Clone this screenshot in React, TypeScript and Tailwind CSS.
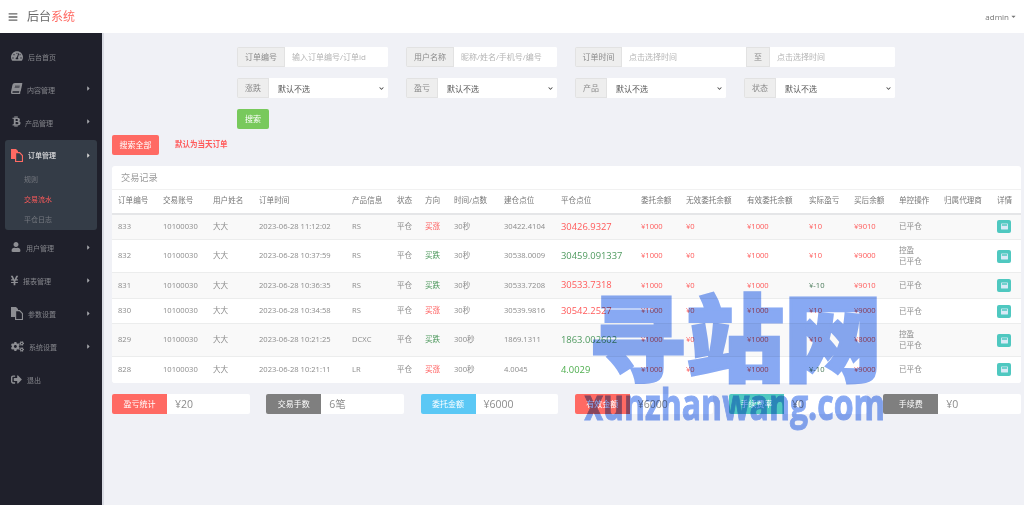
import type { ReactNode } from "react";
import {
  FaBars,
  FaBook,
  FaBtc,
  FaCaretDown,
  FaCaretRight,
  FaChevronDown,
  FaCogs,
  FaSignOutAlt,
  FaTachometerAlt,
  FaUser,
  FaWindowMaximize,
  FaYenSign,
} from "react-icons/fa";

const red = "text-[#ff5a5a]";
const green = "text-[#4f9a5f]";

const rows = [
  { id: 833, name: "RS", dir: "买涨", up: true, time: "2023-06-28 11:12:02", dur: "30秒", open: "30422.4104", close: "30426.9327", closeCls: red, pnl: "¥10", after: "¥9010", ctrl: false, h: "h-[26px]" },
  { id: 832, name: "RS", dir: "买跌", up: false, time: "2023-06-28 10:37:59", dur: "30秒", open: "30538.0009", close: "30459.091337", closeCls: green, pnl: "¥10", after: "¥9000", ctrl: true, h: "h-[33px]" },
  { id: 831, name: "RS", dir: "买跌", up: false, time: "2023-06-28 10:36:35", dur: "30秒", open: "30533.7208", close: "30533.7318", closeCls: red, pnl: "¥-10", after: "¥9010", ctrl: false, h: "h-[26px]" },
  { id: 830, name: "RS", dir: "买涨", up: true, time: "2023-06-28 10:34:58", dur: "30秒", open: "30539.9816", close: "30542.2527", closeCls: red, pnl: "¥10", after: "¥9000", ctrl: false, h: "h-[25px]" },
  { id: 829, name: "DCXC", dir: "买跌", up: false, time: "2023-06-28 10:21:25", dur: "300秒", open: "1869.1311", close: "1863.002602", closeCls: green, pnl: "¥10", after: "¥8000", ctrl: true, h: "h-[33px]" },
  { id: 828, name: "LR", dir: "买涨", up: true, time: "2023-06-28 10:21:11", dur: "300秒", open: "4.0045", close: "4.0029", closeCls: "text-[#4fae4f]", pnl: "¥-10", after: "¥9000", ctrl: false, h: "h-[26px]" },
];

const heads = ["订单编号", "交易账号", "用户姓名", "订单时间", "产品信息", "状态", "方向", "时间/点数", "建仓点位", "平仓点位", "委托余额", "无效委托余额", "有效委托余额", "实际盈亏", "买后余额", "单控操作", "归属代理商", "详情"];
const colWidths = ["w-[45px]", "w-[50px]", "w-[46px]", "w-[93px]", "w-[45px]", "w-[28px]", "w-[29px]", "w-[50px]", "w-[57px]", "w-[80px]", "w-[45px]", "w-[61px]", "w-[62px]", "w-[45px]", "w-[45px]", "w-[45px]", "w-[53px]", "w-[30px]"];

const stats = [
  { label: "盈亏统计", value: "¥20", cls: "bg-[#ff6a63]" },
  { label: "交易手数", value: "6笔", cls: "bg-[#7f7f7f]" },
  { label: "委托金额", value: "¥6000", cls: "bg-[#5bc8f5]" },
  { label: "有效金额", value: "¥6000", cls: "bg-[#ff6a63]" },
  { label: "手续费率", value: "¥0", cls: "bg-[#4fc8c0]" },
  { label: "手续费", value: "¥0", cls: "bg-[#7f7f7f]" },
];

// back page filled, front page outlined
function FilesIcon({ className }: { className: string }) {
  return (
    <svg viewBox="0 0 12 13" className={className} fill="currentColor">
      <path d="M0 0h5l2 2v1H4v7H0z" />
      <path d="M4.6 3.6h4L11.5 6.5v6h-6.9z" fill="none" stroke="currentColor" strokeWidth="1.2" />
    </svg>
  );
}

function NavItem({ icon, label, gap, arrow = true }: { icon: ReactNode; label: string; gap: string; arrow?: boolean }) {
  return (
    <div className="flex h-[33px] items-center pl-[11px] pr-[10px] text-[7px] text-[#85868c]">
      <span className="text-[#8d8e93]">{icon}</span>
      <span className={`${gap} mt-[5px]`}>{label}</span>
      {arrow && <FaCaretRight className="ml-auto text-[7px] text-[#a5a6ab]" />}
    </div>
  );
}

function Label({ children, w }: { children: ReactNode; w: string }) {
  return (
    <span className={`${w} flex shrink-0 items-center justify-center border border-[#e2e2e2] bg-[#eeeeee] text-[8px] text-[#8a8a8a]`}>
      {children}
    </span>
  );
}

function TextField({ label, w, placeholder }: { label: string; w: string; placeholder: string }) {
  return (
    <div className="flex h-[20px] overflow-hidden rounded-[2px] bg-white">
      <Label w={w}>{label}</Label>
      <input placeholder={placeholder} className="min-w-0 flex-1 bg-white px-[7px] text-[8px] outline-none placeholder:text-[#b4b4b4]" />
    </div>
  );
}

function SelectField({ label }: { label: string }) {
  return (
    <div className="relative flex h-[20px] overflow-hidden rounded-[2px] bg-white">
      <Label w="w-[32px]">{label}</Label>
      <select className="min-w-0 flex-1 appearance-none bg-white px-[9px] pt-[2px] text-[8px] text-[#555] outline-none">
        <option>默认不选</option>
      </select>
      <FaChevronDown className="pointer-events-none absolute right-[4px] top-[8px] text-[5px] text-[#444]" />
    </div>
  );
}

export default function App() {
  return (
    <div className="relative flex h-screen flex-col overflow-hidden bg-[#f0f1f6] font-['Open_Sans','Noto_Sans_CJK_SC',sans-serif]">
      <header className="flex h-[33px] shrink-0 items-center bg-white pl-[8px] pr-[7px]">
        <FaBars className="text-[10px] text-[#666]" />
        <h1 className="ml-[9px] text-[12px] text-[#666]">
          后台<span className="text-[#ff6a63]">系统</span>
        </h1>
        <div className="ml-auto flex items-center gap-[1px] text-[8px] text-[#777]">
          admin
          <FaCaretDown className="text-[7px]" />
        </div>
      </header>

      <div className="flex min-h-0 flex-1">
        <aside className="w-[104px] shrink-0 border-r-2 border-[#d9dbe3] bg-[#1f202b] pt-[6px]">
          <NavItem icon={<FaTachometerAlt className="text-[12px]" />} label="后台首页" gap="ml-[5px]" arrow={false} />
          <NavItem icon={<FaBook className="-skew-x-12 text-[11px]" />} label="内容管理" gap="ml-[5px]" />
          <NavItem icon={<FaBtc className="text-[11px]" />} label="产品管理" gap="ml-[3px]" />
          <div className="mx-[5px] mb-[1px] mt-[1.5px] h-[90px] rounded-[3px] bg-[#343c47]">
            <div className="flex h-[29px] items-center pl-[6px] pr-[5px] pt-[2px] text-[7px] font-bold text-[#c9cacd]">
              <FilesIcon className="h-[13px] w-[12px] text-[#ff6a63]" />
              <span className="ml-[5px] mt-[2px]">订单管理</span>
              <FaCaretRight className="ml-auto text-[7px] text-[#d5d5d5]" />
            </div>
            <div className="flex h-[20px] items-center pl-[19px] pt-[3px] text-[7px] text-[#777a80]">规则</div>
            <div className="flex h-[20px] items-center pl-[19px] pt-[3px] text-[7px] text-[#ff5a5a]">交易流水</div>
            <div className="flex h-[20px] items-center pl-[19px] pt-[3px] text-[7px] text-[#777a80]">平仓日志</div>
          </div>
          <NavItem icon={<FaUser className="text-[10px]" />} label="用户管理" gap="ml-[5px]" />
          <NavItem icon={<FaYenSign className="-ml-[2px] text-[11px]" />} label="报表管理" gap="ml-[3px]" />
          <NavItem icon={<FilesIcon className="h-[13px] w-[12px]" />} label="参数设置" gap="ml-[5px]" />
          <NavItem icon={<FaCogs className="text-[13px]" />} label="系统设置" gap="ml-[5px]" />
          <NavItem icon={<FaSignOutAlt className="text-[11px]" />} label="退出" gap="ml-[5px]" arrow={false} />
        </aside>

        <main className="min-w-0 flex-1 pl-[8px] pr-[3px] pt-[14px]">
          <div className="ml-[125px] grid w-[658px] grid-cols-[151px_151px_151px_151px] gap-x-[18px] gap-y-[11px]">
            <TextField label="订单编号" w="w-[48px]" placeholder="输入订单编号/订单id" />
            <TextField label="用户名称" w="w-[48px]" placeholder="昵称/姓名/手机号/编号" />
            <div className="col-span-2 flex h-[20px] overflow-hidden rounded-[2px] bg-white">
              <Label w="w-[47px]">订单时间</Label>
              <input placeholder="点击选择时间" className="min-w-0 flex-1 bg-white px-[7px] text-[8px] outline-none placeholder:text-[#b4b4b4]" />
              <Label w="w-[24px]">至</Label>
              <input placeholder="点击选择时间" className="w-[125px] bg-white px-[7px] text-[8px] outline-none placeholder:text-[#b4b4b4]" />
            </div>
            <SelectField label="涨跌" />
            <SelectField label="盈亏" />
            <SelectField label="产品" />
            <SelectField label="状态" />
            <button className="h-[20px] w-[32px] rounded-[2px] bg-[#78c95c] text-[8px] text-white">搜索</button>
          </div>

          <div className="mt-[5.5px] flex h-[20px] items-center">
            <button className="h-[20px] w-[47px] rounded-[2px] bg-[#ff6a63] text-[8px] text-white">搜索全部</button>
            <span className="ml-[16px] text-[7.5px] font-bold text-[#ff5a5a]">默认为当天订单</span>
          </div>

          <section className="mt-[11px] overflow-hidden rounded-[3px] bg-white">
            <div className="flex h-[24px] items-center border-b border-[#f1f1f1] pl-[9px] pt-[1px] text-[9.2px] text-[#9a9a9a]">交易记录</div>
            <table className="w-[909px] table-fixed border-collapse text-left text-[7.6px] text-[#8c8c8c]">
              <colgroup>
                {colWidths.map((w, i) => (
                  <col key={i} className={w} />
                ))}
              </colgroup>
              <thead>
                <tr className="h-[24px] border-b-2 border-[#e5e6e8]">
                  {heads.map((h) => (
                    <th key={h} className="whitespace-nowrap pl-[6px] font-normal text-[#777]">
                      {h}
                    </th>
                  ))}
                </tr>
              </thead>
              <tbody>
                {rows.map((r, i) => (
                  <tr key={r.id} className={`${r.h} border-b border-[#eceded] last:border-b-0 ${i % 2 === 0 ? "bg-[#f9f9f9]" : "bg-white"}`}>
                    <td className="pl-[6px]">{r.id}</td>
                    <td className="pl-[6px]">10100030</td>
                    <td className="pl-[6px]">大大</td>
                    <td className="whitespace-nowrap pl-[6px]">{r.time}</td>
                    <td className="pl-[6px]">{r.name}</td>
                    <td className="pl-[6px]">平仓</td>
                    <td className={`pl-[6px] ${r.up ? red : green}`}>{r.dir}</td>
                    <td className="pl-[6px]">{r.dur}</td>
                    <td className="pl-[6px]">{r.open}</td>
                    <td className={`whitespace-nowrap pl-[6px] text-[9.4px] ${r.closeCls}`}>{r.close}</td>
                    <td className={`pl-[6px] ${red}`}>¥1000</td>
                    <td className={`pl-[6px] ${red}`}>¥0</td>
                    <td className={`pl-[6px] ${red}`}>¥1000</td>
                    <td className={`pl-[6px] ${r.pnl === "¥-10" ? "text-[#4a7a5a]" : red}`}>{r.pnl}</td>
                    <td className={`pl-[6px] ${red}`}>{r.after}</td>
                    <td className="pl-[6px] leading-[11px]">
                      {r.ctrl && <div>控盈</div>}
                      <div>已平仓</div>
                    </td>
                    <td />
                    <td className="pl-[6px]">
                      <span className="flex h-[13px] w-[14px] items-center justify-center rounded-[2px] bg-[#4fc8c0]">
                        <FaWindowMaximize className="text-[7px] text-[#d8eaf6]" />
                      </span>
                    </td>
                  </tr>
                ))}
              </tbody>
            </table>
          </section>

          <div className="mt-[11px] grid grid-cols-6 gap-x-[16.5px]">
            {stats.map((s) => (
              <div key={s.label + s.cls} className="flex h-[20px] overflow-hidden rounded-[2px] bg-white">
                <span className={`${s.cls} flex w-[55px] shrink-0 items-center justify-center text-[8px] text-white`}>{s.label}</span>
                <span className="pl-[8px] text-[10.5px] leading-[20px] text-[#8c8c8c]">{s.value}</span>
              </div>
            ))}
          </div>
        </main>
      </div>

      <div className="pointer-events-none absolute left-[583px] top-[277px] flex w-[304px] flex-col items-center font-['Noto_Sans_CJK_SC',sans-serif] font-black text-[#88a9f3] mix-blend-multiply">
        <span className="origin-bottom scale-y-[0.96] whitespace-nowrap text-[98px] leading-[108px] [-webkit-text-stroke:3px_#88a9f3]">寻站网</span>
        <span className="mt-[-5px] scale-x-[0.745] whitespace-nowrap font-['Open_Sans',sans-serif] text-[43px] font-bold leading-[48px] [-webkit-text-stroke:1px_#88a9f3]">xunzhanwang.com</span>
      </div>
    </div>
  );
}
